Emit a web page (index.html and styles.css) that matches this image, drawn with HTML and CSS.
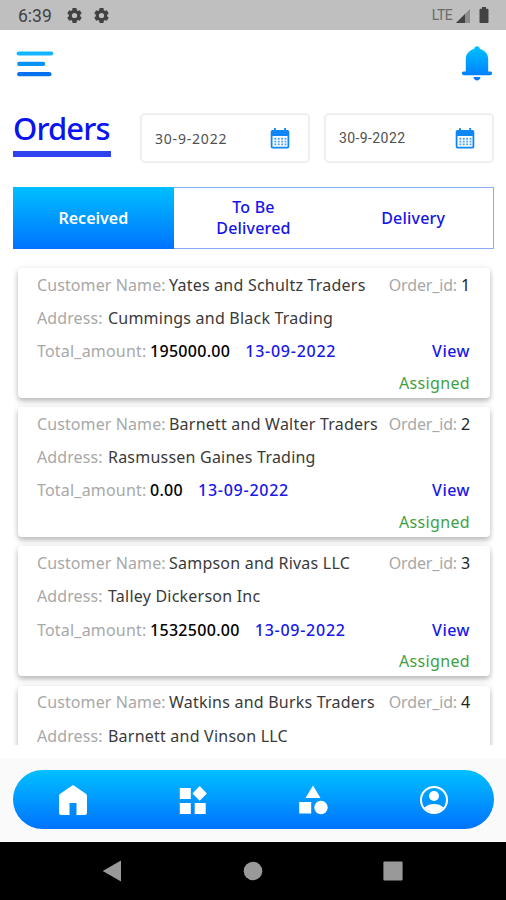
FILE: index.html
```
<!DOCTYPE html>
<html lang="en">

<head>
    <meta charset="utf-8">
    <meta name="viewport" content="width=device-width, initial-scale=1">
    <title>Orders</title>
    <link rel="stylesheet" href="styles.css">
</head>

<body>
    <!-- gradient shared by the icons -->
    <svg class="defs" width="0" height="0">
        <defs>
            <linearGradient id="blue" gradientUnits="userSpaceOnUse" x1="0" y1="0" x2="0" y2="36">
                <stop offset="0" stop-color="#00c3ff" />
                <stop offset="1" stop-color="#0072ff" />
            </linearGradient>
            <symbol id="gear" viewBox="0 0 24 24">
                <path fill-rule="evenodd" d="M19.900 13.200a7.500 7.500 0 0 0 0-2.400l2.300-1.700-2.600-4.500-2.700 1.100a7.500 7.500 0 0 0-1.700-1L14.800 1.500H9.200l-.4 3.200a7.500 7.500 0 0 0-1.700 1L4.400 4.600 1.800 9.100l2.300 1.700a7.500 7.500 0 0 0 0 2.400l-2.300 1.700 2.600 4.500 2.700-1.100a7.500 7.500 0 0 0 1.700 1l.4 3.200h5.600l.4-3.200a7.500 7.500 0 0 0 1.700-1l2.700 1.100 2.600-4.500zM12 15.700a3.700 3.700 0 1 1 0-7.400 3.700 3.700 0 0 1 0 7.400z" />
            </symbol>
            <symbol id="calendar" viewBox="0 0 20 21">
                <path fill="#0e86f4" fill-rule="evenodd" d="M4 0h1.800v2h8.400V0H16v2h1.500A1.800 1.800 0 0 1 19.300 3.800v14.900a1.800 1.800 0 0 1-1.800 1.800h-15A1.800 1.800 0 0 1 .7 18.700V3.800A1.800 1.800 0 0 1 2.500 2H4zM2.500 8v10.700h15V8z" />
                <path stroke="#4aa2f5" stroke-width="1.900" stroke-dasharray="1.900 1.500" d="M4.400 10.800h12M4.400 13.600h12M4.400 16.400h12" />
            </symbol>
        </defs>
    </svg>

    <div class="status_bar">
        <span class="time">6:39</span>
        <svg class="gear"><use href="#gear" /></svg>
        <svg class="gear"><use href="#gear" /></svg>
        <span class="lte">LTE</span>
        <svg class="signal" width="14" height="14" viewBox="0 0 14 14">
            <path fill="#8d8d8d" d="M14 0v14H0z" />
            <path fill="#424242" d="M9 5v9H0z" />
        </svg>
        <svg class="battery" width="10" height="16" viewBox="0 0 10 16">
            <path fill="#424242" d="M3 0h4v1.700h1.500a1 1 0 0 1 1 1V15a1 1 0 0 1-1 1h-7a1 1 0 0 1-1-1V2.700a1 1 0 0 1 1-1H3z" />
        </svg>
    </div>

    <header class="top_bar">
        <svg width="38" height="28" viewBox="0 0 38 28" fill="none" stroke-linecap="round" stroke-width="4.200">
            <path stroke="#12b5ff" d="M2.700 3.500h32.500" />
            <path stroke="#0a93f2" d="M3.200 13.900h24" />
            <path stroke="#0671ee" d="M3.200 24.200h30.200" />
        </svg>
        <svg width="30" height="36" viewBox="0 0 30 36">
            <path fill="url(#blue)" d="M15 .3c1.600 0 2.600 1 2.900 2.600C23 4.100 26.200 8 26.200 13v12.400h2a1.900 1.900 0 0 1 0 3.800H1.800a1.900 1.900 0 0 1 0-3.800h2V13c0-5 3.200-8.900 8.300-10.100C12.400 1.300 13.400.3 15 .3zM11.500 31h7c-.3 2.200-1.700 3.600-3.500 3.600S11.800 33.200 11.500 31z" />
        </svg>
    </header>

    <div class="filters">
        <h1>Orders</h1>
        <div class="date">
            <span>30-9-2022</span>
            <svg><use href="#calendar" /></svg>
        </div>
        <div class="date date_to">
            <span>30-9-2022</span>
            <svg><use href="#calendar" /></svg>
        </div>
    </div>

    <div class="tabs">
        <div class="tab active">Received</div>
        <div class="tab">To Be<br>Delivered</div>
        <div class="tab">Delivery</div>
    </div>

    <main class="orders">
        <div class="card">
            <div class="row">
                <span class="label name">Customer Name:</span>
                <span class="value">Yates and Schultz Traders</span>
                <span class="order_id">Order_id: <b>1</b></span>
            </div>
            <div class="row">
                <span class="label address">Address:</span>
                <span class="value">Cummings and Black Trading</span>
            </div>
            <div class="row">
                <span class="label total">Total_amount:</span>
                <span class="amount">195000.00</span>
                <span class="day">13-09-2022</span>
                <span class="view">View</span>
            </div>
            <div class="status">Assigned</div>
        </div>

        <div class="card">
            <div class="row">
                <span class="label name">Customer Name:</span>
                <span class="value">Barnett and Walter Traders</span>
                <span class="order_id">Order_id: <b>2</b></span>
            </div>
            <div class="row">
                <span class="label address">Address:</span>
                <span class="value">Rasmussen Gaines Trading</span>
            </div>
            <div class="row">
                <span class="label total">Total_amount:</span>
                <span class="amount">0.00</span>
                <span class="day">13-09-2022</span>
                <span class="view">View</span>
            </div>
            <div class="status">Assigned</div>
        </div>

        <div class="card">
            <div class="row">
                <span class="label name">Customer Name:</span>
                <span class="value">Sampson and Rivas LLC</span>
                <span class="order_id">Order_id: <b>3</b></span>
            </div>
            <div class="row">
                <span class="label address">Address:</span>
                <span class="value">Talley Dickerson Inc</span>
            </div>
            <div class="row">
                <span class="label total">Total_amount:</span>
                <span class="amount">1532500.00</span>
                <span class="day">13-09-2022</span>
                <span class="view">View</span>
            </div>
            <div class="status">Assigned</div>
        </div>

        <div class="card">
            <div class="row">
                <span class="label name">Customer Name:</span>
                <span class="value">Watkins and Burks Traders</span>
                <span class="order_id">Order_id: <b>4</b></span>
            </div>
            <div class="row">
                <span class="label address">Address:</span>
                <span class="value">Barnett and Vinson LLC</span>
            </div>
        </div>
    </main>

    <footer class="bottom">
        <nav class="menu">
            <div class="item">
                <svg width="30" height="32" viewBox="0 0 30 32">
                    <path fill="#fff" d="M15 1l12.500 8.600a3 3 0 0 1 1.500 2.600v16.300a2.500 2.500 0 0 1-2.500 2.500H18.500V19h-7v12H3.500A2.500 2.500 0 0 1 1 28.500V12.200a3 3 0 0 1 1.500-2.600z" />
                </svg>
            </div>
            <div class="item">
                <svg width="28" height="30" viewBox="0 0 28 30">
                    <path fill="#fff" d="M.8 3h11v11H.8zM.8 18h11v11H.8zM15.700 18h11v11h-11zM20.700 1l7.200 7.400-7.200 7.400-7.200-7.400z" />
                </svg>
            </div>
            <div class="item">
                <svg width="32" height="30" viewBox="0 0 32 30">
                    <path fill="#fff" d="M15 .5l7.500 12.600h-15zM1.200 17h12v11.500h-12z" />
                    <circle fill="#fff" cx="23" cy="22.500" r="6.700" />
                </svg>
            </div>
            <div class="item">
                <svg width="30" height="30" viewBox="0 0 30 30">
                    <circle fill="none" stroke="#fff" stroke-width="2" cx="15" cy="15" r="13" />
                    <circle fill="#fff" cx="15" cy="11" r="5" />
                    <path fill="#fff" d="M5.500 22.500c5-4.600 14-4.600 19 0A12 12 0 0 1 5.500 22.500z" />
                </svg>
            </div>
        </nav>
    </footer>

    <div class="system_nav">
        <svg width="20" height="22" viewBox="0 0 20 22"><path fill="#999" d="M19 .5v21L.7 11z" /></svg>
        <svg width="20" height="20" viewBox="0 0 20 20"><circle fill="#999" cx="10" cy="10" r="9.300" /></svg>
        <svg width="20" height="20" viewBox="0 0 20 20"><rect fill="#999" x=".4" y=".4" width="19.200" height="19.200" rx="1" /></svg>
    </div>
</body>

</html>
```
FILE: styles.css
```
* {
    box-sizing: border-box;
}

body {
    margin: 0;
    width: 506px;
    height: 900px;
    overflow: hidden;
    display: flex;
    flex-direction: column;
    background-color: #fff;
    font-family: "Noto Sans", "Open Sans", sans-serif;
}

svg {
    display: block;
    flex-shrink: 0;
}

.defs {
    position: absolute;
}

/* Android status bar */
.status_bar {
    height: 30px;
    flex-shrink: 0;
    display: flex;
    align-items: center;
    padding: 0 17px 0 18px;
    background-color: #bfbfbf;
    color: #424242;
    font-family: Roboto, sans-serif;
}

.time {
    width: 48px;
    font-size: 17.500px;
    padding-top: 2px;
}

.gear {
    width: 17px;
    height: 17px;
    margin-right: 10px;
    fill: #424242;
}

.lte {
    margin-left: auto;
    font-size: 14px;
    color: #6b6b6b;
    letter-spacing: -0.6px;
}

.signal {
    margin: 2px 9px 0 4px;
}

.top_bar {
    height: 68px;
    flex-shrink: 0;
    display: flex;
    justify-content: space-between;
    align-items: center;
    padding: 0 14px 0 16px;
}

/* Title and dates */
.filters {
    height: 66px;
    flex-shrink: 0;
    display: flex;
    padding: 15px 12px 0 13px;
}

h1 {
    width: 98px;
    height: 44px;
    margin: 0 29px 0 0;
    border-bottom: 6px solid #2f42f0;
    color: #0a14ee;
    font-size: 31px;
    font-weight: 500;
    line-height: 30px;
    letter-spacing: -0.9px;
}

.date {
    width: 170px;
    height: 50px;
    display: flex;
    align-items: center;
    justify-content: space-between;
    padding: 0 18px 0 13px;
    border: 2px solid #efefef;
    border-radius: 5px;
    color: #505050;
    font-size: 14px;
    letter-spacing: 0.8px;
}

.date_to {
    margin-left: 14px;
    padding-right: 17px;
    font-family: Roboto, sans-serif;
    letter-spacing: 0.4px;
}

.date svg {
    width: 20px;
    height: 21px;
}

/* Tabs */
.tabs {
    height: 62px;
    flex-shrink: 0;
    display: grid;
    grid-template-columns: repeat(3, 1fr);
    margin: 23px 12px 0 13px;
    border: 1.5px solid #8aabf5;
}

.tab {
    display: flex;
    align-items: center;
    justify-content: center;
    text-align: center;
    color: #1414e6;
    font-size: 16px;
    font-weight: 500;
    line-height: 21px;
    letter-spacing: 0.2px;
}

.tab.active {
    margin: -1px 0 -1px -1px;
    background: linear-gradient(#00c0ff, #0072ff);
    color: #fff;
    font-weight: 600;
    letter-spacing: 0;
}

/* Order list */
.orders {
    height: 485px;
    flex-shrink: 0;
    margin: 11px 12px 0 13px;
    padding: 8px 4px 0 5px;
    overflow: hidden;
}

.card {
    height: 130px;
    margin-bottom: 9.200px;
    padding: 0 20px 0 19px;
    background-color: #fff;
    border-radius: 4px;
    box-shadow: 0 3px 4px rgba(0, 0, 0, 0.18), 0 2px 8px rgba(0, 0, 0, 0.14);
    font-size: 16px;
}

.row {
    height: 33.300px;
    display: flex;
    align-items: center;
    white-space: nowrap;
}

.label,
.order_id {
    color: #a8a8a8;
    font-weight: 400;
}

.label {
    letter-spacing: 0.1px;
}

.order_id {
    letter-spacing: -0.15px;
}

.name {
    width: 132px;
}

.address {
    width: 71px;
}

.total {
    width: 113px;
    letter-spacing: 0.2px;
}

.value {
    color: #3a3a3a;
    letter-spacing: 0.22px;
}

.order_id,
.view {
    margin-left: auto;
}

.order_id b {
    color: #222;
    font-weight: 400;
}

.amount {
    color: #000;
    font-weight: 500;
    letter-spacing: 0.3px;
}

.day {
    margin-left: 15px;
    letter-spacing: 0.75px;
}

.day,
.view {
    color: #1818ea;
    font-weight: 500;
}

.view {
    letter-spacing: 0.5px;
}

.status {
    height: 30px;
    line-height: 30px;
    color: #3f9f46;
    letter-spacing: 0.35px;
    text-align: right;
}

/* Bottom menu */
.bottom {
    height: 84px;
    flex-shrink: 0;
    margin-top: 13px;
    padding: 12px 12px 0 13px;
    background-color: #fafafa;
}

.menu {
    height: 59px;
    display: grid;
    grid-template-columns: repeat(4, 1fr);
    border-radius: 30px;
    background: linear-gradient(#00c0ff, #0072ff);
}

.item {
    display: flex;
    align-items: center;
    justify-content: center;
}

.system_nav {
    flex: 1;
    display: flex;
    align-items: center;
    justify-content: space-between;
    padding: 0 103px 0 102px;
    background-color: #000;
}
```
